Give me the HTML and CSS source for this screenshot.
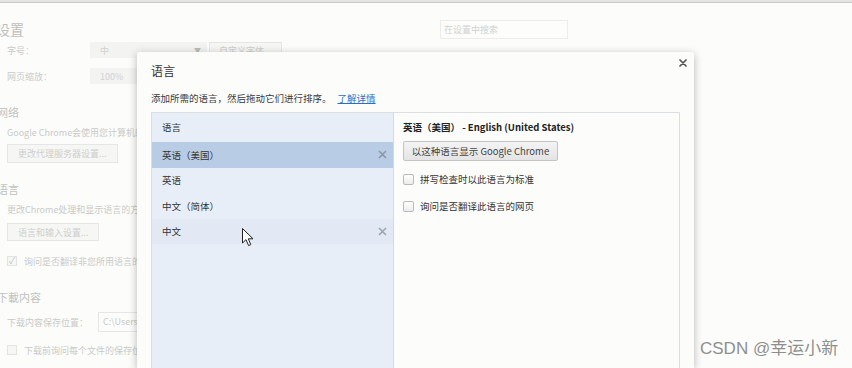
FILE: index.html
```html
<!DOCTYPE html>
<html lang="zh-CN">
<head>
<meta charset="utf-8">
<title>语言</title>
<link rel="stylesheet" href="styles.css">
</head>
<body>
<div class="topbar"></div>
<main class="settings">
  <header class="settings-head">
    <h1 class="page-title">设置</h1>
    <div class="search">在设置中搜索</div>
  </header>
  <div class="row r-font">
    <span class="label">字号：</span>
    <span class="select s-font"><span>中</span><span class="arrow">▼</span></span>
    <span class="btn">自定义字体...</span>
  </div>
  <div class="row r-zoom">
    <span class="label">网页缩放：</span>
    <span class="select s-zoom"><span>100%</span></span>
  </div>
  <h2 class="sec-title t-net">网络</h2>
  <p class="desc clip d-net">Google Chrome会使用您计算机的系统代理设置连接到网络。</p>
  <div class="btn btn-block b-proxy">更改代理服务器设置...</div>
  <h2 class="sec-title t-lang">语言</h2>
  <p class="desc clip d-lang">更改Chrome处理和显示语言的方式。</p>
  <div class="btn btn-block b-lang">语言和输入设置...</div>
  <div class="check-row clip c-translate"><span class="bgcheck">✓</span>询问是否翻译非您所用语言的网页</div>
  <h2 class="sec-title t-dl">下載内容</h2>
  <div class="row clip r-dl"><span class="label label-auto">下载内容保存位置：</span><span class="input">C:\Users\Administrator\Downloads</span></div>
  <div class="check-row clip c-ask"><span class="bgcheck"></span>下载前询问每个文件的保存位置</div>
</main>

<div class="dialog">
  <svg class="close" width="8" height="8" viewBox="0 0 8 8"><path d="M1 1L7 7M7 1L1 7" stroke="#555" stroke-width="1.7" stroke-linecap="round"/></svg>
  <h3 class="dlg-title">语言</h3>
  <p class="dlg-desc">添加所需的语言，然后拖动它们进行排序。<a class="link">了解详情</a></p>
  <div class="lang-panel">
    <div class="lang-list">
      <div class="list-head">语言</div>
      <div class="lang-item selected">英语（美国）<svg class="remove" width="9" height="9" viewBox="0 0 9 9"><path d="M1 1L8 8M8 1L1 8" stroke="#8a97a8" stroke-width="1.6"/></svg></div>
      <div class="lang-item">英语</div>
      <div class="lang-item">中文（简体）</div>
      <div class="lang-item hover">中文<svg class="remove" width="9" height="9" viewBox="0 0 9 9"><path d="M1 1L8 8M8 1L1 8" stroke="#9aa5b4" stroke-width="1.6"/></svg></div>
    </div>
    <div class="lang-detail">
      <div class="detail-title">英语（美国） - English (United States)</div>
      <div class="ui-btn">以这种语言显示 Google Chrome</div>
      <div class="opt o-spell"><span class="cb"></span>拼写检查时以此语言为标准</div>
      <div class="opt o-trans"><span class="cb"></span>询问是否翻译此语言的网页</div>
    </div>
  </div>
</div>

<svg class="cursor" width="13" height="19" viewBox="0 0 13 19"><path d="M0.5 0.5L0.5 15L4 11.6L6.6 17.6L8.8 16.6L6.3 10.8L11 10.8Z" fill="#fff" stroke="#222" stroke-width="1" stroke-linejoin="round"/></svg>

<div class="watermark">CSDN @幸运小新</div>
</body>
</html>
```

FILE: styles.css
```css
* { box-sizing: border-box; }
html, body { margin: 0; padding: 0; }
body {
  width: 852px;
  height: 368px;
  overflow: hidden;
  background: #fcfdfb;
  font-family: "Noto Sans CJK SC", "Liberation Sans", sans-serif;
  font-size: 9px;
  color: #c9cac8;
  position: relative;
}
h1, h2, h3, p { margin: 0; font-weight: normal; }

.topbar {
  height: 3px;
  border-top: 2px solid #e5e6e3;
  background: #c9cbc7;
}

.settings { padding-left: 7px; }
.settings-head {
  display: flex;
  align-items: center;
  height: 19px;
  margin-top: 17px;
}
.page-title {
  font-size: 14px;
  line-height: 19px;
  color: #bfc0be;
  margin-left: -11px;
  width: 444px;
}
.search {
  width: 128px;
  height: 19px;
  border: 1px solid #ecedeb;
  background: #fdfefc;
  padding-left: 3px;
  line-height: 17px;
  color: #d0d1cf;
}

.clip { width: 130px; overflow: hidden; }

.row { display: flex; align-items: center; height: 16px; }
.r-font { margin-top: 3px; }
.r-zoom { margin-top: 10px; }
.label { width: 83px; flex: none; }
.label-auto { width: auto; margin-right: 10px; }
.select {
  display: flex;
  align-items: center;
  justify-content: space-between;
  width: 117px;
  height: 16px;
  background: #f3f4f2;
  padding: 0 6px 0 10px;
  color: #d0d1cf;
}
.arrow { font-size: 7px; color: #bbbcba; }
.btn {
  display: inline-flex;
  align-items: center;
  height: 16px;
  padding: 0 9px;
  border: 1px solid #e6e7e5;
  background: #f6f7f5;
  color: #cdcecc;
  margin-left: 2px;
}
.btn-block { display: flex; width: max-content; margin-left: 0; padding: 0 8px 0 10px; }
.b-proxy { height: 19px; margin-top: 4px; width: 111px; }
.b-lang { height: 18px; margin-top: 6px; width: 92px; }

.sec-title {
  font-size: 11px;
  line-height: 16px;
  color: #c1c2c0;
  margin-left: -10px;
}
.t-net { margin-top: 20px; }
.t-lang { margin-top: 18px; }
.t-dl { margin-top: 21px; }
.desc { line-height: 14px; margin-top: 6px; white-space: nowrap; }

.check-row { display: flex; align-items: center; height: 14px; white-space: nowrap; }
.c-translate { margin-top: 13px; }
.c-ask { margin-top: 11px; }
.bgcheck {
  flex: none;
  width: 10px;
  height: 10px;
  border: 1px solid #e3e4e2;
  background: #f7f8f6;
  margin-right: 7px;
  font-size: 9px;
  line-height: 8px;
  color: #c3c4c2;
  text-align: center;
}
.r-dl { margin-top: 7px; height: 20px; }
.input {
  height: 20px;
  border: 1px solid #e6e7e5;
  padding-left: 4px;
  line-height: 18px;
  color: #c8c9c7;
  white-space: nowrap;
}

/* dialog */
.dialog {
  position: absolute;
  left: 137px;
  top: 52px;
  width: 557px;
  height: 316px;
  background: #fcfdfb;
  border-radius: 2px 2px 0 0;
  box-shadow: 0 2px 9px rgba(0, 0, 0, 0.28);
  padding: 11px 14px 0 14px;
  color: #333;
  display: flex;
  flex-direction: column;
}
.close { position: absolute; right: 7px; top: 7px; }
.dlg-title { font-size: 12px; line-height: 16px; color: #333; }
.dlg-desc { font-size: 9.5px; line-height: 14px; margin-top: 12px; color: #3a3a3a; }
.link { color: #2b6cc4; text-decoration: underline; margin-left: 6px; }

.lang-panel {
  display: flex;
  flex: 1;
  margin-top: 7px;
  border: 1px solid #dcdfe2;
  border-bottom: 0;
}
.lang-list {
  width: 241px;
  flex: none;
  background: #e8eef7;
  font-size: 9.5px;
  color: #333;
}
.list-head { height: 29px; line-height: 29px; padding-left: 10px; }
.lang-item {
  display: flex;
  align-items: center;
  justify-content: space-between;
  height: 25.5px;
  padding: 0 6px 0 10px;
}
.lang-item.selected { background: #b9cce5; }
.lang-item.hover { background: #e2e9f4; }

.lang-detail {
  flex: 1;
  border-left: 1px solid #d6dade;
  padding: 7px 0 0 9px;
  font-size: 9.5px;
  color: #333;
}
.detail-title { font-weight: bold; line-height: 14px; color: #222; }
.ui-btn {
  width: 155px;
  height: 20px;
  margin-top: 7px;
  border: 1px solid #c3c3c3;
  border-radius: 2px;
  background: linear-gradient(#f4f4f4, #e4e4e4);
  color: #444;
  line-height: 18px;
  text-align: center;
}
.opt { display: flex; align-items: center; height: 14px; }
.o-spell { margin-top: 11px; }
.o-trans { margin-top: 13px; }
.cb {
  width: 11px;
  height: 11px;
  border: 1px solid #b9b9b9;
  border-radius: 2px;
  background: linear-gradient(#ffffff, #ececec);
  margin-right: 6px;
}

.cursor { position: absolute; left: 242px; top: 228px; }

.watermark {
  position: absolute;
  left: 700px;
  top: 338px;
  font-family: "Liberation Sans", "Noto Sans CJK SC", sans-serif;
  font-size: 17px;
  line-height: 22px;
  color: #8e8e8e;
  text-shadow: 0 0 1px #fff;
  white-space: nowrap;
}
```
